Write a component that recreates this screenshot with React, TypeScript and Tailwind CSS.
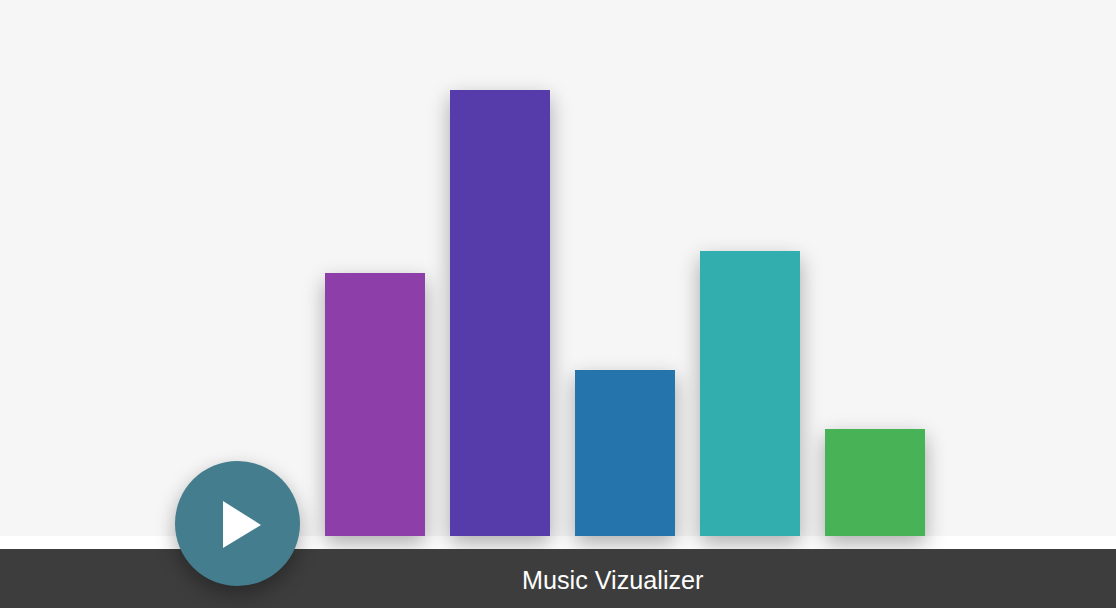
const BARS = [
  { height: 263, color: "#8e3ea9" },
  { height: 446, color: "#563cab" },
  { height: 166, color: "#2574ab" },
  { height: 285, color: "#32aeae" },
  { height: 107, color: "#47b356" },
];

export default function App() {
  return (
    <div className="relative h-[608px] w-[1116px] overflow-hidden bg-white font-['Liberation_Sans',Arial,sans-serif]">
      <main className="flex h-[536px] items-end gap-[25px] bg-[#f6f6f6] pl-[325px]">
        {BARS.map((bar) => (
          <div
            key={bar.color}
            className="w-[100px] shadow-[0_8px_20px_rgba(0,0,0,0.32)]"
            style={{ height: bar.height, backgroundColor: bar.color }}
          />
        ))}
      </main>
      <footer className="relative mt-[13px] flex h-[59px] items-center bg-[#3d3d3d] pl-[522px] pt-[4px] text-[25.2px] text-white">
        Music Vizualizer
      </footer>
      <button className="absolute left-[175px] top-[461px] flex h-[125px] w-[125px] items-center justify-center rounded-full bg-[#437d8e] shadow-[0_8px_20px_rgba(0,0,0,0.32)]">
        <svg width="38" height="47" viewBox="0 0 38 47" className="ml-[8px] mt-[2px]">
          <path d="M0 0L38 24L0 47Z" fill="#fff" />
        </svg>
      </button>
    </div>
  );
}
